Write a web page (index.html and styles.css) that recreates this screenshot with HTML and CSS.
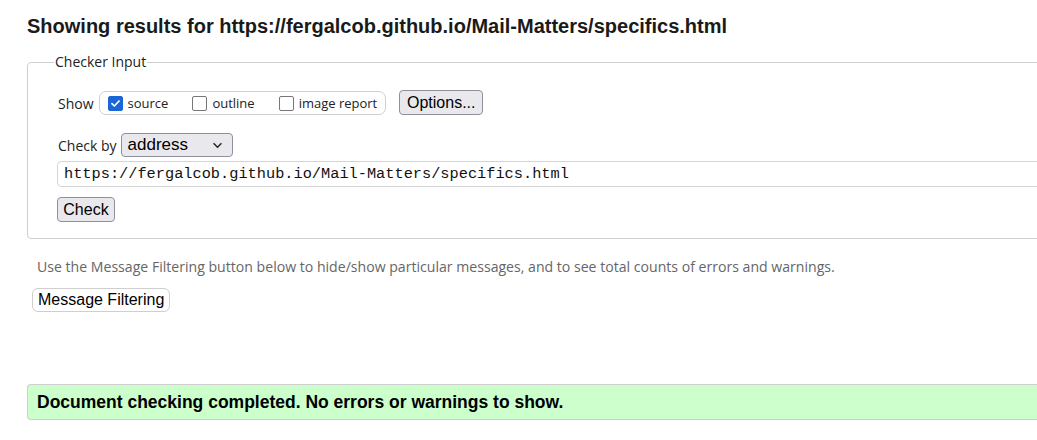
FILE: index.html
```html
<!DOCTYPE html>
<html lang="en">
<head>
<meta charset="utf-8">
<title>Showing results</title>
<link rel="stylesheet" href="styles.css">
</head>
<body>
<div class="page">
  <h2 class="title">Showing results for https://fergalcob.github.io/Mail-Matters/specifics.html</h2>
  <fieldset class="checker">
    <legend class="legend">Checker Input</legend>
    <div class="row show-row">
      <span class="label">Show</span>
      <span class="opts">
        <span class="opt"><span class="cb checked"><svg viewBox="0 0 16 16" width="15" height="15"><path d="M3.6 8.2 L6.6 11.1 L12.4 4.9" fill="none" stroke="#fff" stroke-width="2" stroke-linecap="round" stroke-linejoin="round"/></svg></span><span class="opt-text">source</span></span>
        <span class="opt"><span class="cb"></span><span class="opt-text">outline</span></span>
        <span class="opt"><span class="cb"></span><span class="opt-text">image report</span></span>
      </span>
      <span class="btn btn-options">Options...</span>
    </div>
    <div class="row by-row">
      <span class="label">Check by</span>
      <span class="select"><span class="select-text">address</span><svg class="chev" viewBox="0 0 12 8" width="11" height="7"><path d="M1.5 1.5 L6 6 L10.5 1.5" fill="none" stroke="#222" stroke-width="1.6"/></svg></span>
    </div>
    <div class="url-input">https://fergalcob.github.io/Mail-Matters/specifics.html</div>
    <div class="row check-row"><span class="btn btn-check">Check</span></div>
  </fieldset>
  <p class="hint">Use the Message Filtering button below to hide/show particular messages, and to see total counts of errors and warnings.</p>
  <div class="filter-row"><span class="btn-filter">Message Filtering</span></div>
  <div class="success">Document checking completed. No errors or warnings to show.</div>
</div>
</body>
</html>
```
FILE: styles.css
```css
html, body {
  margin: 0;
  padding: 0;
  background: #fff;
  overflow: hidden;
}
body {
  font-family: "Open Sans", "Noto Sans", sans-serif;
  color: #222;
}
.page {
  width: 1100px;
  padding: 0 0 0 27px;
}
.title {
  font-family: "Liberation Sans", Arial, sans-serif;
  font-weight: bold;
  font-size: 20px;
  line-height: 24px;
  margin: 14px 0 0 0;
  color: #1a1a1a;
}
.checker {
  margin: 15px 0 0 0;
  border: 1px solid #cfcfcf;
  border-radius: 4px;
  padding: 0 0 16px 29px;
  min-width: 0;
}
.legend {
  font-size: 14px;
  line-height: 18px;
  padding: 0 1px;
  margin-left: -3px;
  color: #222;
}
.row {
  display: flex;
  align-items: center;
}
.label {
  font-size: 14px;
  margin-left: 1px;
  white-space: nowrap;
}
.show-row {
  margin-top: 19px;
  height: 26px;
}
.opts {
  display: flex;
  align-items: center;
  height: 22px;
  margin-left: 5px;
  padding: 0 8px 0 8px;
  border: 1px solid #cfcfcf;
  border-radius: 7px;
  white-space: nowrap;
  flex: none;
}
.opt {
  display: flex;
  align-items: center;
  margin-right: 24px;
  white-space: nowrap;
}
.opt:last-child { margin-right: 0; }
.cb {
  box-sizing: border-box;
  width: 15px;
  height: 15px;
  border: 1.5px solid #767676;
  border-radius: 2px;
  display: inline-flex;
  align-items: center;
  justify-content: center;
  flex: none;
}
.cb.checked {
  background: #1a66d6;
  border-color: #1a66d6;
}
.cb svg { display: block; }
.opt-text {
  font-size: 13px;
  margin-left: 5px;
}
.btn {
  box-sizing: border-box;
  display: inline-flex;
  align-items: center;
  justify-content: center;
  background: #e9e9ed;
  border: 1px solid #8f8f9d;
  border-radius: 4px;
  font-family: "Liberation Sans", Arial, sans-serif;
  font-size: 16px;
  color: #000;
  flex: none;
}
.btn-options {
  margin-left: 13px;
  width: 84px;
  height: 25px;
  margin-top: -1px;
}
.by-row {
  margin-top: 17px;
  height: 24px;
}
.select {
  box-sizing: border-box;
  margin-left: 4px;
  width: 112px;
  height: 24px;
  background: #e9e9ed;
  border: 1px solid #8f8f9d;
  border-radius: 4px;
  display: flex;
  align-items: center;
  justify-content: space-between;
  padding: 0 9px 0 6px;
  font-family: "Liberation Sans", Arial, sans-serif;
  font-size: 17px;
  color: #000;
}
.chev { display: block; }
.url-input {
  box-sizing: border-box;
  margin-top: 4px;
  height: 26px;
  border: 1px solid #d4d4d4;
  border-right: none;
  border-radius: 5px 0 0 5px;
  padding: 0 0 0 6px;
  display: flex;
  align-items: center;
  font-family: "Liberation Mono", "DejaVu Sans Mono", monospace;
  font-size: 15.3px;
  color: #111;
}
.check-row {
  margin-top: 10px;
}
.btn-check {
  width: 58px;
  height: 25px;
}
.hint {
  margin: 19px 0 0 10px;
  font-size: 14.1px;
  line-height: 18px;
  color: #666;
  white-space: nowrap;
}
.filter-row {
  margin-top: 12px;
  margin-left: 5px;
  display: flex;
}
.btn-filter {
  box-sizing: border-box;
  height: 24px;
  padding: 0 5px;
  display: inline-flex;
  align-items: center;
  border: 1px solid #cfcfcf;
  border-radius: 6px;
  background: #fff;
  font-family: "Liberation Sans", Arial, sans-serif;
  font-size: 16px;
  color: #000;
}
.success {
  box-sizing: border-box;
  margin-top: 72px;
  height: 36px;
  border: 1px solid #cfcfcf;
  border-right: none;
  border-radius: 4px 0 0 4px;
  background: #ccffcc;
  padding-left: 9px;
  display: flex;
  align-items: center;
  font-family: "Liberation Sans", Arial, sans-serif;
  font-weight: bold;
  font-size: 17.5px;
  color: #000;
}
```
